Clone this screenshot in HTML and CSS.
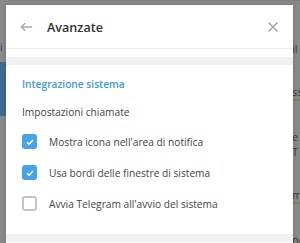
FILE: index.html
```html
<!DOCTYPE html>
<html lang="it">
<head>
  <meta charset="UTF-8">
  <meta name="viewport" content="width=device-width, initial-scale=1.0">
  <title>Avanzate</title>
  <link rel="stylesheet" href="styles.css">
</head>
<body>

  <!-- Dimmed app behind the dialog -->
  <div class="app">
    <div class="side">
      <div class="side-row"><span class="side-link">i s</span></div>
      <div class="side-row active"></div>
      <div class="side-row"></div>
    </div>
    <div class="main">
      <div class="main-title">Marco's Box - Community</div>
      <div class="main-body">
        <div class="msg">il</div>
        <div class="msg line">ss</div>
        <div class="msg">e T</div>
        <div class="msg line">m</div>
        <div class="msg line">ne</div>
      </div>
    </div>
  </div>

  <!-- Settings dialog -->
  <div class="dialog">
    <div class="dialog-header">
      <span class="back">
        <svg viewBox="0 0 14 10" fill="none" stroke="currentColor" stroke-width="1.4">
          <path d="M13 5H1.5M5.5 1L1.5 5l4 4"/>
        </svg>
      </span>
      <span class="dialog-title">Avanzate</span>
      <span class="close">
        <svg viewBox="0 0 10 10" fill="none" stroke="currentColor" stroke-width="1.4">
          <path d="M0.5 0.5l9 9M9.5 0.5l-9 9"/>
        </svg>
      </span>
    </div>
    <div class="skip"></div>
    <div class="section">
      <div class="section-title">Integrazione sistema</div>
      <div class="subtitle">Impostazioni chiamate</div>
      <label class="check-row">
        <span class="box checked">
          <svg viewBox="0 0 10 10" fill="none" stroke="#fff" stroke-width="1.6"><path d="M2 5.2l2 2 4-4.2"/></svg>
        </span>
        <span>Mostra icona nell'area di notifica</span>
      </label>
      <label class="check-row">
        <span class="box checked">
          <svg viewBox="0 0 10 10" fill="none" stroke="#fff" stroke-width="1.6"><path d="M2 5.2l2 2 4-4.2"/></svg>
        </span>
        <span>Usa bordi delle finestre di sistema</span>
      </label>
      <label class="check-row">
        <span class="box"></span>
        <span>Avvia Telegram all'avvio del sistema</span>
      </label>
    </div>
    <div class="skip"></div>
  </div>

</body>
</html>
```

FILE: styles.css
```css
* {
  margin: 0;
  padding: 0;
  box-sizing: border-box;
  font-family: "Open Sans", sans-serif;
}

body {
  width: 300px;
  height: 243px;
  overflow: hidden;
  background-color: #898989;
  position: relative;
}

/* Background app, dimmed */
.app {
  display: flex;
  height: 100%;
}

.side {
  width: 8px;
  display: flex;
  flex-direction: column;
  padding-top: 34px;
}

.side-row {
  height: 28px;
}

.side-link {
  color: #1f4f7a;
  font-size: 10px;
}

.side-row.active {
  height: 54px;
  background-color: #3e6b90;
}

.main {
  flex: 1;
  display: flex;
  flex-direction: column;
}

.main-title {
  height: 5px;
  overflow: hidden;
  line-height: 0;
  padding-left: 104px;
  font-size: 13px;
  color: #2c2c2c;
  border-bottom: 1px solid #7c7c7c;
}

.main-body {
  display: flex;
  flex-direction: column;
  align-items: flex-end;
  padding-top: 40px;
  gap: 28px;
}

.msg {
  font-size: 11px;
  color: #3a3a3a;
  width: 8px;
  overflow: hidden;
}

.msg.line {
  border-bottom: 2px solid #7a8060;
}

/* Dialog */
.dialog {
  position: absolute;
  left: 6px;
  top: 5px;
  width: 287px;
  height: 240px;
  background-color: #fff;
  box-shadow: 0 0 4px rgba(0, 0, 0, 0.15);
}

.dialog-header {
  height: 44px;
  display: flex;
  align-items: center;
  padding: 0 15px 0 14px;
  border-bottom: 1px solid #f0f0f0;
  margin-bottom: 8px;
}

.back {
  width: 13px;
  height: 10px;
  color: #a8a8a8;
  display: flex;
  margin-right: 14px;
}

.back svg, .close svg {
  width: 100%;
  height: 100%;
}

.dialog-title {
  flex: 1;
  font-size: 12.6px;
  font-weight: 600;
  color: #333;
  margin-top: 2px;
}

.close {
  width: 10px;
  height: 10px;
  color: #a0a0a0;
  display: flex;
}

.skip {
  height: 8px;
  background-color: #f1f1f1;
}

.section {
  height: 169px;
  padding: 12px 16px 0 16px;
}

.section-title {
  font-size: 10.2px;
  font-weight: 600;
  color: #3e9ad8;
  height: 28px;
}

.subtitle {
  font-size: 10.2px;
  color: #444;
  height: 21px;
}

.check-row {
  display: flex;
  align-items: center;
  gap: 12px;
  height: 31px;
  font-size: 10.2px;
  color: #444;
}

.box {
  width: 15px;
  height: 15px;
  border: 2px solid #c4c4c4;
  border-radius: 3px;
  display: flex;
  align-items: center;
  justify-content: center;
}

.box.checked {
  background-color: #46a4e4;
  border-color: #46a4e4;
}

.box svg {
  width: 10px;
  height: 10px;
}
```
